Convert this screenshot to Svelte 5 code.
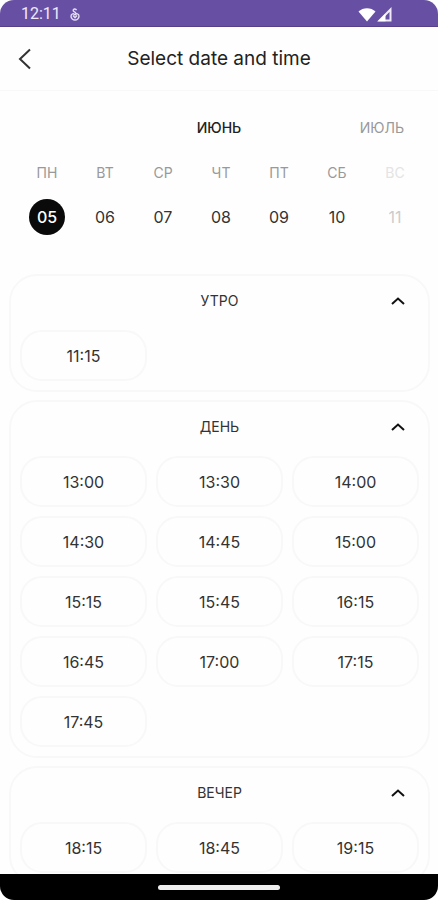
<script lang="ts">
    const weekdays = ["ПН", "ВТ", "СР", "ЧТ", "ПТ", "СБ", "ВС"];
    const days = weekdays.map((name, i) => ({
        name,
        date: String(i + 5).padStart(2, "0"),
    }));

    let selectedDate = $state("05");
    let selectedTime = $state("");
    let month = $state("ИЮНЬ");

    let periods = $state([
        { title: "УТРО", open: true, slots: ["11:15"] },
        {
            title: "ДЕНЬ",
            open: true,
            slots: [
                "13:00", "13:30", "14:00",
                "14:30", "14:45", "15:00",
                "15:15", "15:45", "16:15",
                "16:45", "17:00", "17:15",
                "17:45",
            ],
        },
        { title: "ВЕЧЕР", open: true, slots: ["18:15", "18:45", "19:15"] },
    ]);
</script>

<div class="screen">
    <div class="status-bar">
        <span>12:11</span>
        <svg class="status-app" width="10" height="13" viewBox="0 0 10 13" aria-hidden="true">
            <path d="M6.500 2.200C6 .5 3 .6 3.200 2.600 3.400 4 6 3.800 5.800 5.500M5 7.300C4 4.800 1 5.500 1 8.300c0 2 2 3.700 4 3.700s4-1.700 4-3.700C9 5.500 6 4.800 5 7.300M3 7.500l2 2.300 2-2.300" />
        </svg>
        <div class="signals">
            <svg width="18" height="15" viewBox="0 0 18 15" aria-hidden="true">
                <path fill="#fff" d="M.5 4.500C5 0 13 0 17.500 4.500L9 14.500z" />
            </svg>
            <svg width="15" height="15" viewBox="0 0 15 15" aria-hidden="true">
                <path fill="none" stroke="#efe9f8" stroke-width="2" d="M13.500 2.500v11h-11z" />
                <path fill="#fff" d="M1 14.200 8.500 6.500v7.700z" />
            </svg>
        </div>
    </div>

    <header class="header">
        <button class="back" aria-label="Back">
            <svg width="14" height="22" viewBox="0 0 14 22" aria-hidden="true">
                <path d="M12 1.500 2 11l10 9.500" />
            </svg>
        </button>
        <h1>Select date and time</h1>
    </header>

    <main class="content">
        <section class="calendar">
            <div class="months">
                <button
                    class="month current"
                    class:active={month === "ИЮНЬ"}
                    onclick={() => (month = "ИЮНЬ")}
                >ИЮНЬ</button>
                <button
                    class="month next"
                    class:active={month === "ИЮЛЬ"}
                    onclick={() => (month = "ИЮЛЬ")}
                >ИЮЛЬ</button>
            </div>
            <div class="days">
                {#each days as day}
                    <button
                        class="day"
                        class:selected={selectedDate === day.date}
                        onclick={() => (selectedDate = day.date)}
                    >
                        <span class="weekday">{day.name}</span>
                        <span class="date">{day.date}</span>
                    </button>
                {/each}
            </div>
        </section>

        <div class="periods">
            {#each periods as period}
                <section class="period">
                    <button
                        class="period-header"
                        aria-expanded={period.open}
                        onclick={() => (period.open = !period.open)}
                    >
                        <span class="period-title">{period.title}</span>
                        <svg
                            class="chevron"
                            class:closed={!period.open}
                            width="14"
                            height="8"
                            viewBox="0 0 14 8"
                            aria-hidden="true"
                        >
                            <path d="M1 7l6-5.500L13 7" />
                        </svg>
                    </button>
                    {#if period.open}
                        <div class="slots">
                            {#each period.slots as slot}
                                <button
                                    class="slot"
                                    class:picked={selectedTime === slot}
                                    onclick={() => (selectedTime = slot)}
                                >{slot}</button>
                            {/each}
                        </div>
                    {/if}
                </section>
            {/each}
        </div>
    </main>

    <div class="nav-bar">
        <div class="handle"></div>
    </div>
</div>

<style>
    :global(body) {
        margin: 0;
        background: #fff;
    }

    .screen {
        display: flex;
        flex-direction: column;
        height: 100vh;
        overflow: hidden;
        border-radius: 14px;
        background: #fefefe;
        color: #333;
        font-family: Inter, "Noto Sans", sans-serif;
    }

    button {
        padding: 0;
        border: none;
        background: none;
        color: inherit;
        font: inherit;
        cursor: pointer;
    }

    .status-bar {
        display: flex;
        flex: none;
        align-items: center;
        gap: 9px;
        box-sizing: border-box;
        height: 27px;
        padding: 2px 46px 0 21px;
        border-bottom: 1px solid #56408c;
        background: #6750a4;
        color: #efe9f8;
        font: 16px/24px Roboto, sans-serif;
    }

    .status-app {
        fill: none;
        stroke: #e4dcf2;
        stroke-width: 1.4;
    }

    .signals {
        display: flex;
        gap: 1px;
        margin-left: auto;
    }

    .header {
        display: grid;
        flex: none;
        grid-template-columns: 38px 1fr 38px;
        align-items: center;
        box-sizing: border-box;
        height: 64px;
        padding: 0 6px;
        border-bottom: 1px solid #f8f8f8;
    }

    .back {
        display: flex;
        align-items: center;
        justify-content: center;
        height: 40px;
    }

    .back svg {
        fill: none;
        stroke: #333;
        stroke-width: 2;
    }

    h1 {
        margin: 0;
        color: #222;
        font-size: 19px;
        font-weight: 400;
        line-height: 24px;
        text-align: center;
    }

    .content {
        flex: 1;
        min-height: 0;
        overflow-y: auto;
        scrollbar-width: none;
    }

    .calendar {
        padding: 25px 14px 39px 18px;
    }

    .months {
        display: grid;
        grid-template-columns: 1fr auto 1fr;
        align-items: center;
        padding: 0 20px 0 16px;
    }

    .month {
        color: #999;
        font-size: 14px;
        line-height: 24px;
    }

    .month.active {
        color: #222;
        font-weight: 500;
    }

    .current {
        grid-column: 2;
    }

    .next {
        justify-self: end;
    }

    .days {
        display: grid;
        grid-template-columns: repeat(7, 1fr);
        margin-top: 21px;
    }

    .day {
        display: flex;
        flex-direction: column;
        align-items: center;
        gap: 14px;
    }

    .weekday {
        color: #999;
        font-size: 14px;
        line-height: 24px;
    }

    .date {
        width: 36px;
        border-radius: 50%;
        font-size: 16px;
        line-height: 36px;
        text-align: center;
    }

    .day:last-child .weekday {
        color: #e4e4e4;
    }

    .day:last-child .date {
        color: #ccc;
    }

    .day.selected .date {
        background: #0a0a0a;
        color: #fff;
        font-weight: 500;
    }

    .periods {
        display: flex;
        flex-direction: column;
        gap: 8px;
        padding: 0 8px 8px 9px;
    }

    .period {
        padding: 0 9px 9px;
        border: 2px solid #f8f8f8;
        border-radius: 28px;
    }

    .period-header {
        display: grid;
        grid-template-columns: 1fr auto 1fr;
        align-items: center;
        width: 100%;
        height: 54px;
        padding: 0 14px 4px;
    }

    .period-title {
        grid-column: 2;
        font-size: 14px;
        line-height: 20px;
    }

    .chevron {
        justify-self: end;
        fill: none;
        stroke: #111;
        stroke-width: 2;
    }

    .chevron.closed {
        transform: rotate(180deg);
    }

    .slots {
        display: grid;
        grid-template-columns: repeat(3, 1fr);
        gap: 9px;
    }

    .slot {
        height: 51px;
        border: 2px solid #f8f8f8;
        border-radius: 22px;
        font-size: 16px;
    }

    .slot.picked {
        border-color: #0a0a0a;
    }

    .nav-bar {
        display: flex;
        flex: none;
        align-items: center;
        justify-content: center;
        height: 26px;
        background: #000;
    }

    .handle {
        width: 122px;
        height: 5px;
        border-radius: 3px;
        background: #eee;
    }
</style>
